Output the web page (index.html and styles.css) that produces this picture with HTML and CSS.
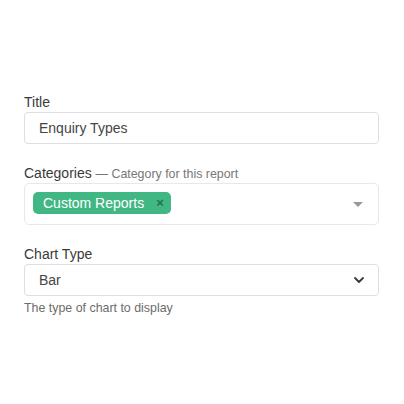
FILE: index.html
```html
<!DOCTYPE html>
<html lang="en">
<head>
    <meta charset="UTF-8">
    <meta name="viewport" content="width=device-width, initial-scale=1.0">
    <title>Report Settings</title>
    <link rel="stylesheet" href="styles.css">
</head>
<body>
    <div class="form">
        <div class="form-group">
            <label for="title">Title</label>
            <input type="text" id="title" class="form-control" value="Enquiry Types">
        </div>
        <div class="form-group">
            <label>Categories <span class="hint">&mdash; Category for this report</span></label>
            <div class="multiselect">
                <div class="tags">
                    <span class="tag">Custom Reports<i class="tag-remove">&times;</i></span>
                </div>
                <div class="caret"></div>
            </div>
        </div>
        <div class="form-group">
            <label for="chart">Chart Type</label>
            <div class="select">
                <span class="select-value">Bar</span>
                <svg class="chevron" width="12" height="8" viewBox="0 0 12 8">
                    <path d="M2 2 L6 6 L10 2" fill="none" stroke="#343a40" stroke-width="1.8" stroke-linecap="round" stroke-linejoin="round"/>
                </svg>
            </div>
            <p class="help">The type of chart to display</p>
        </div>
    </div>
</body>
</html>
```

FILE: styles.css
```css
body {
    margin: 0;
    font-family: "Liberation Sans", Arial, sans-serif;
    color: #333;
    background-color: #fff;
}
.form {
    padding: 92px 25px 0 24px;
}
.form-group {
    margin-bottom: 19px;
}
.form-group label {
    display: block;
    font-size: 14px;
    line-height: 20px;
    height: 20px;
    color: #3a3a3a;
}
.hint {
    font-size: 12.4px;
    line-height: 1;
    color: #777;
}
.form-control {
    box-sizing: border-box;
    display: block;
    width: 100%;
    height: 32px;
    margin: 0;
    padding: 0 14px;
    border: 1px solid #dcdfe3;
    border-radius: 4px;
    font-family: inherit;
    font-size: 14px;
    color: #454545;
    outline: none;
}
.multiselect {
    box-sizing: border-box;
    display: flex;
    min-height: 42px;
    border: 1px solid #e8e8e8;
    border-radius: 5px;
    background-color: #fff;
}
.tags {
    flex: 1;
    padding: 8px 0 0 8px;
}
.tag {
    position: relative;
    display: inline-block;
    padding: 4px 27px 4px 10px;
    border-radius: 5px;
    background-color: #41b883;
    color: #fff;
    font-size: 14px;
    line-height: 14px;
}
.tag-remove {
    position: absolute;
    right: 0;
    top: 0;
    width: 22px;
    height: 22px;
    font-style: normal;
    font-weight: bold;
    font-size: 13px;
    line-height: 22px;
    text-align: center;
    color: #266d4d;
}
.caret {
    position: relative;
    width: 40px;
}
.caret::before {
    content: "";
    position: absolute;
    left: 15px;
    top: 18px;
    border-style: solid;
    border-width: 5px 5px 0;
    border-color: #999 transparent transparent;
}
.select {
    box-sizing: border-box;
    display: flex;
    align-items: center;
    justify-content: space-between;
    height: 32px;
    padding: 0 13px 0 14px;
    border: 1px solid #dcdfe3;
    border-radius: 4px;
    font-size: 14px;
    color: #454545;
}
.help {
    margin: 4px 0 0;
    font-size: 12.4px;
    line-height: 16px;
    color: #6c6c6c;
}
```
